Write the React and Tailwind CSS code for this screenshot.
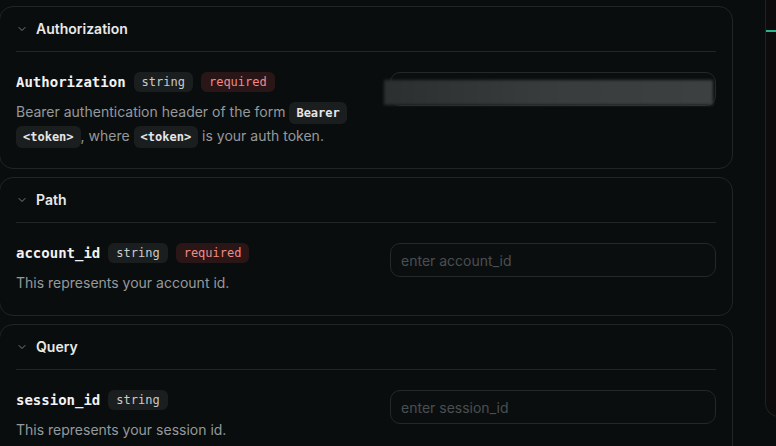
import { ChevronDown } from 'lucide-react';

const sans = { fontFamily: 'Inter, "Noto Sans", sans-serif' };
const mono = { fontFamily: '"DejaVu Sans Mono", "Liberation Mono", monospace' };

function Code({ children }) {
  return (
    <code
      className="rounded-md bg-[#1b1e1f] px-[7px] py-[4px] text-[12px] leading-none font-bold text-[#e6e6e6] [box-decoration-break:clone]"
      style={mono}
    >
      {children}
    </code>
  );
}

function Badge({ children, tone = 'gray' }) {
  const cls =
    tone === 'red'
      ? 'bg-[#2a1617] text-[#f08a8a]'
      : 'bg-[#1b1e1f] text-[#c9cbcc]';
  return (
    <span className={`flex h-5 items-center rounded-md px-2 text-[12px] ${cls}`} style={mono}>
      {children}
    </span>
  );
}

function Section({ title, children }) {
  return (
    <section className="rounded-[14px] border border-[#222526] px-4">
      <div className="flex items-center gap-[8px] border-b border-[#232627] py-3">
        <ChevronDown size={12} strokeWidth={2} className="text-[#7d8082]" />
        <span className="text-[14px] leading-5 font-semibold text-[#e8e9e9]">{title}</span>
      </div>
      {children}
    </section>
  );
}

function Field({ name, required, placeholder, redacted, children }) {
  return (
    <div className="flex gap-6 py-5">
      <div className="min-w-0 flex-1">
        <div className="flex items-center gap-2">
          <span className="text-[14px] leading-5 font-bold text-[#f2f2f2]" style={mono}>
            {name}
          </span>
          <Badge>string</Badge>
          {required && <Badge tone="red">required</Badge>}
        </div>
        <p className="mt-2 text-[14px] leading-6 text-[#96999b]">{children}</p>
      </div>
      <div className="relative w-[326px] shrink-0">
        <input
          className="h-[34px] w-full rounded-[10px] border border-[#25282a] bg-[#0b0e0f] px-[10px] text-[14px] text-[#ddd] outline-none placeholder:text-[#4a4e50]"
          placeholder={placeholder}
          style={sans}
        />
        {redacted && (
          <div className="absolute top-[8px] left-[-6px] h-[25px] w-[329px] bg-gradient-to-r from-[#2c2f30] via-[#383c3d] to-[#3c4041] blur-[1.5px]" />
        )}
      </div>
    </div>
  );
}

export default function App() {
  return (
    <div className="flex h-[446px] w-[776px] overflow-hidden bg-[#0a0d0e]" style={sans}>
      <div className="mt-[6px] ml-[-1px] flex w-[734px] shrink-0 flex-col gap-[8px]">
        <Section title="Authorization">
          <Field name="Authorization" required redacted>
            Bearer authentication header of the form <Code>Bearer &lt;token&gt;</Code>, where{' '}
            <Code>&lt;token&gt;</Code> is your auth token.
          </Field>
        </Section>
        <Section title="Path">
          <Field name="account_id" required placeholder="enter account_id">
            This represents your account id.
          </Field>
        </Section>
        <Section title="Query">
          <Field name="session_id" placeholder="enter session_id">
            This represents your session id.
          </Field>
        </Section>
      </div>
      <aside className="ml-[32px] mt-[-20px] h-[437px] w-[300px] shrink-0 rounded-bl-[14px] border-b border-l border-[#1f2223] bg-[#0d0b0b]">
        <div className="mt-[50px] h-[2px] w-full bg-[#2bb58f]" />
      </aside>
    </div>
  );
}
